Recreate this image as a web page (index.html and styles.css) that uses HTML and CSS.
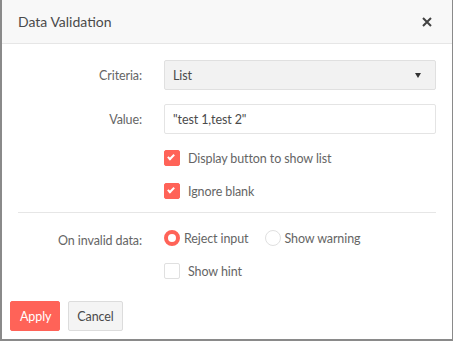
FILE: index.html
```html
<!DOCTYPE html>
<html lang="en">
<head>
    <meta charset="UTF-8">
    <meta name="viewport" content="width=device-width, initial-scale=1.0">
    <title>Data Validation</title>
    <link rel="stylesheet" href="styles.css">
</head>
<body>
<div class="dialog">
    <header class="titlebar">
        <span class="title">Data Validation</span>
        <button class="close" aria-label="Close">
            <svg width="10" height="10" viewBox="0 0 10 10"><path d="M1 1L9 9M9 1L1 9" stroke="#424242" stroke-width="2"/></svg>
        </button>
    </header>
    <section class="content">
        <div class="row">
            <label class="label" for="criteria">Criteria:</label>
            <div class="select" id="criteria">
                <span>List</span>
                <span class="arrow"></span>
            </div>
        </div>
        <div class="row">
            <label class="label" for="value">Value:</label>
            <input class="input" type="text" id="value" value="&quot;test 1,test 2&quot;">
        </div>
        <div class="row check-row">
            <span></span>
            <label class="check"><span class="box checked"></span>Display button to show list</label>
        </div>
        <div class="row check-row">
            <span></span>
            <label class="check"><span class="box checked"></span>Ignore blank</label>
        </div>
        <hr class="separator">
        <div class="row invalid-row">
            <span class="label label-top">On invalid data:</span>
            <div class="options">
                <div class="radios">
                    <label class="check"><span class="radio selected"></span>Reject input</label>
                    <label class="check"><span class="radio"></span>Show warning</label>
                </div>
                <label class="check"><span class="box"></span>Show hint</label>
            </div>
        </div>
    </section>
    <footer class="actions">
        <button class="btn primary">Apply</button>
        <button class="btn">Cancel</button>
    </footer>
</div>
</body>
</html>
```

FILE: styles.css
```css
*, *::before, *::after{
    box-sizing: border-box;
    padding: 0;
    margin: 0;
}

body{
    background-color: #8a8a8a;
    font-family: Lato, 'Open Sans', sans-serif;
    font-size: 12.5px;
    letter-spacing: -0.1px;
    color: #656565;
}

.dialog{
    width: 450px;
    height: 339px;
    margin-left: 2px;
    background-color: #FFF;
    display: flex;
    flex-direction: column;
}

.titlebar{
    height: 44px;
    background-color: #f8f8f8;
    border-bottom: 1px solid #e6e6e6;
    display: flex;
    align-items: center;
    justify-content: space-between;
    padding: 0 20px 0 16px;
}

.title{
    font-size: 14px;
    color: #4a4a4a;
    padding-bottom: 1px;
    letter-spacing: 0;
}

.close{
    border: none;
    background: none;
    width: 10px;
    height: 10px;
    display: flex;
    margin-top: 1px;
}

.content{
    padding: 16px 16px 0;
    display: flex;
    flex-direction: column;
}

.row{
    display: grid;
    grid-template-columns: 124px 1fr;
    column-gap: 22px;
    align-items: center;
    margin-bottom: 14px;
}

.label{
    text-align: right;
    color: #656565;
}

.select{
    height: 30px;
    background-color: #f2f2f2;
    border: 1px solid #e0e0e0;
    border-radius: 2px;
    display: flex;
    align-items: center;
    justify-content: space-between;
    padding: 0 14px 0 8px;
    color: #4a4a4a;
}

.arrow{
    width: 0;
    height: 0;
    border-left: 3px solid transparent;
    border-right: 3px solid transparent;
    border-top: 5px solid #333;
}

.input{
    height: 30px;
    border: 1px solid #e4e4e4;
    border-radius: 2px;
    padding: 0 8px;
    font: inherit;
    letter-spacing: inherit;
    color: #4a4a4a;
    outline: none;
}

.check-row{
    margin-bottom: 13px;
}

.check{
    display: flex;
    align-items: center;
    gap: 8px;
    height: 20px;
    color: #656565;
}

.box{
    width: 16px;
    height: 16px;
    border: 1px solid #e0e0e0;
    border-radius: 2px;
    background-color: #FFF;
    position: relative;
}

.box.checked{
    background-color: #ff6358;
    border-color: #ff6358;
}

.box.checked::after{
    content: '';
    position: absolute;
    left: 4px;
    top: 2px;
    width: 4px;
    height: 7px;
    border-right: 2px solid #FFF;
    border-bottom: 2px solid #FFF;
    transform: rotate(45deg);
}

.separator{
    border: none;
    border-top: 1px solid #e6e6e6;
    margin: -2px 0 15px;
}

.invalid-row{
    align-items: start;
    margin-bottom: 0;
}

.label-top{
    padding-top: 5px;
}

.options{
    display: flex;
    flex-direction: column;
    gap: 13px;
}

.radios{
    display: flex;
    gap: 16px;
}

.radios .check{
    gap: 4px;
}

.radio{
    width: 16px;
    height: 16px;
    border-radius: 50%;
    border: 1px solid #e0e0e0;
    background-color: #FFF;
}

.radio.selected{
    border: 4px solid #ff6358;
}

.actions{
    margin-top: auto;
    padding: 8px;
    display: flex;
    gap: 8px;
}

.btn{
    height: 30px;
    padding: 0 8px;
    border: 1px solid #dcdcdc;
    border-radius: 2px;
    background-color: #f4f4f4;
    color: #4a4a4a;
    font: inherit;
    font-size: 12.5px;
    letter-spacing: -0.1px;
}

.btn.primary{
    background-color: #ff6358;
    border-color: #ff6358;
    color: #FFF;
    padding: 0 8px 0 9px;
}
```
